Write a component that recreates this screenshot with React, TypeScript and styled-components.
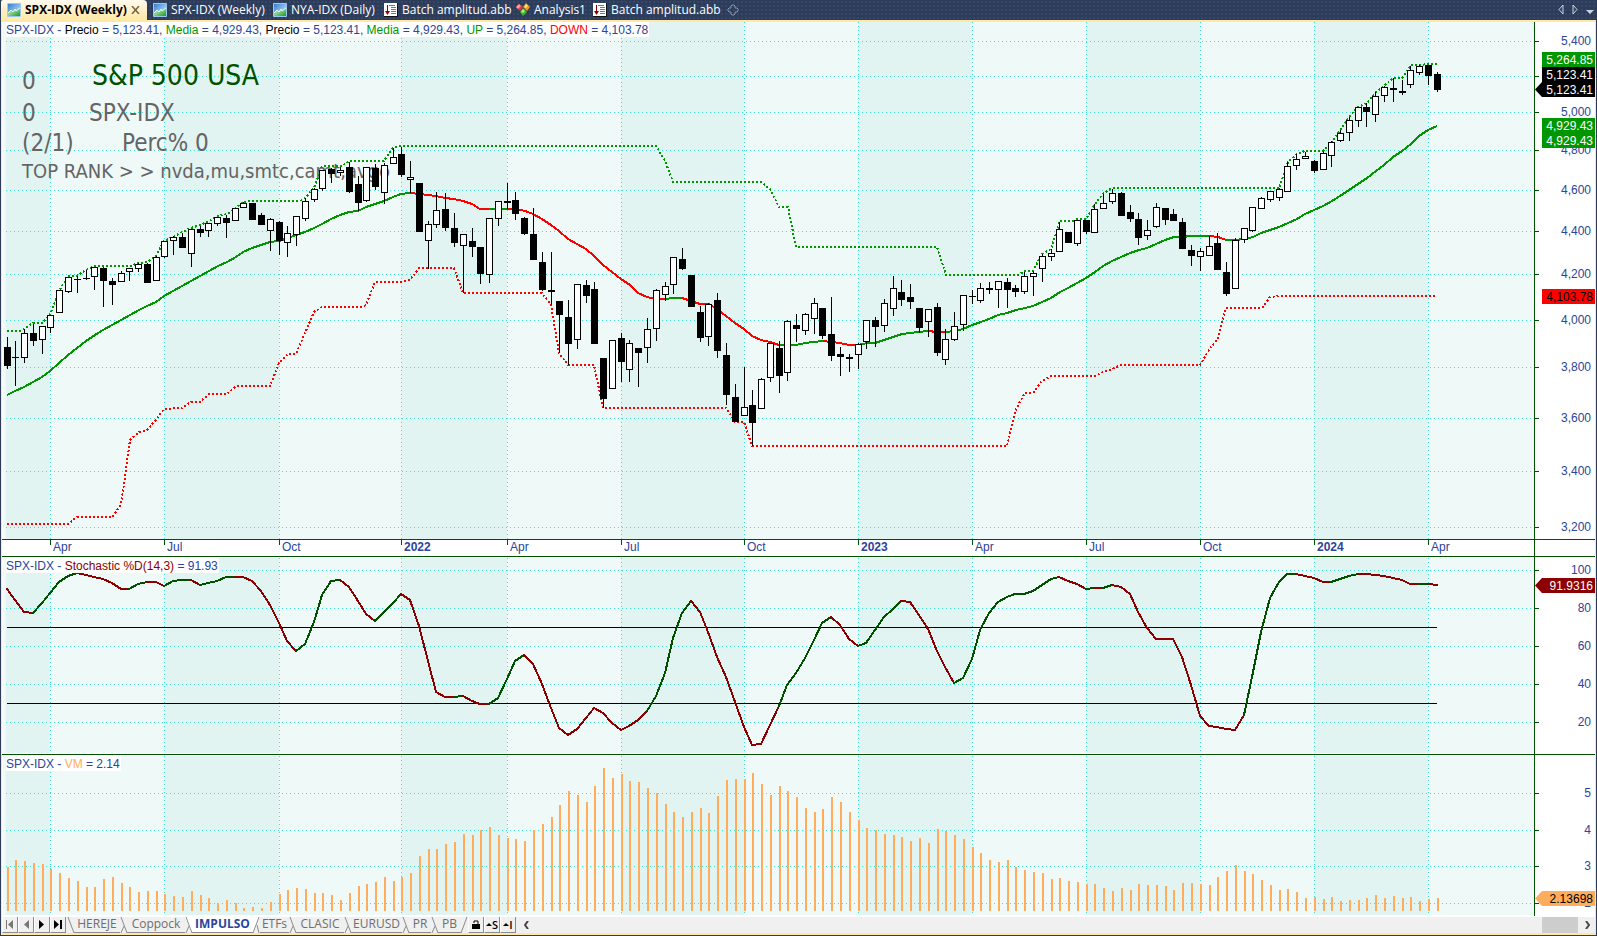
import React from "react";
import styled, { createGlobalStyle } from "styled-components";

/* ---------- palette ---------- */

const navy = "#2d3c5b";
const cream = "#ffe8a6";
const axisGreen = "#005000";
const labelBlue = "#2a459a";
const bandDark = "#e1f4f2";
const bandLight = "#eff9f8";
const gridTeal = "#40e0d0";
const up = "#009600";
const down = "#ff0000";
const stochUp = "#005000";
const stochDown = "#8b0000";
const vmOrange = "#ffad5c";

/* ---------- data ---------- */

type Candle = [high: number, top: number, bottom: number, low: number, filled: 0 | 1];

const candles: Candle[] = [
  [337, 347, 366, 369, 1], [341, 357, 358, 386, 1], [329, 333, 358, 363, 0], [324, 333, 341, 346, 1],
  [326, 326, 340, 354, 0], [315, 315, 328, 333, 0], [290, 290, 313, 313, 0], [277, 277, 292, 293, 0],
  [276, 279, 280, 293, 1], [270, 278, 279, 280, 1], [267, 267, 277, 290, 0], [267, 268, 281, 307, 1],
  [278, 281, 285, 305, 1], [271, 273, 282, 282, 0], [268, 268, 272, 281, 0], [263, 264, 269, 272, 0],
  [263, 264, 283, 283, 1], [256, 257, 281, 281, 0], [241, 241, 257, 258, 0], [236, 237, 241, 255, 0],
  [233, 237, 248, 248, 1], [229, 229, 254, 267, 0], [226, 229, 233, 237, 1], [223, 223, 231, 237, 0],
  [217, 217, 224, 226, 0], [215, 218, 223, 238, 1], [208, 208, 221, 221, 0], [202, 203, 208, 208, 0],
  [203, 203, 220, 220, 1], [213, 215, 225, 225, 1], [218, 219, 231, 251, 0], [221, 222, 241, 255, 1],
  [226, 233, 243, 257, 0], [216, 216, 235, 246, 0], [198, 201, 219, 221, 0], [188, 189, 200, 202, 0],
  [170, 170, 189, 191, 0], [168, 169, 174, 183, 1], [167, 170, 173, 176, 0], [162, 167, 192, 193, 1],
  [176, 184, 203, 211, 1], [167, 167, 201, 202, 0], [164, 168, 187, 190, 1], [163, 165, 193, 204, 0],
  [148, 157, 164, 164, 0], [147, 154, 175, 177, 1], [161, 177, 180, 193, 0], [183, 183, 232, 232, 1],
  [221, 224, 241, 269, 0], [192, 210, 225, 228, 0], [193, 209, 228, 231, 1], [213, 228, 243, 247, 1],
  [234, 234, 246, 293, 0], [228, 241, 247, 257, 1], [247, 247, 274, 284, 1], [218, 218, 275, 283, 0],
  [201, 201, 219, 226, 0], [183, 201, 203, 209, 1], [192, 200, 214, 220, 1], [217, 218, 234, 235, 1],
  [208, 234, 260, 260, 1], [252, 262, 290, 291, 1], [252, 290, 292, 305, 1], [301, 301, 315, 353, 1],
  [300, 317, 344, 365, 1], [284, 284, 340, 349, 0], [280, 285, 296, 303, 1], [282, 289, 344, 344, 1],
  [358, 358, 399, 408, 1], [340, 340, 389, 389, 0], [333, 338, 362, 382, 1], [340, 343, 370, 382, 0],
  [348, 348, 353, 387, 1], [318, 329, 348, 363, 0], [289, 290, 329, 341, 0], [282, 286, 295, 301, 0],
  [257, 257, 285, 294, 0], [248, 259, 269, 270, 1], [275, 275, 307, 307, 1], [306, 312, 338, 342, 1],
  [303, 304, 337, 346, 0], [293, 300, 351, 358, 1], [343, 355, 395, 405, 1], [384, 397, 422, 422, 1],
  [367, 407, 416, 416, 0], [390, 405, 423, 446, 1], [378, 379, 409, 409, 0], [343, 343, 378, 382, 0],
  [341, 348, 376, 393, 1], [320, 321, 373, 381, 0], [314, 325, 329, 342, 1], [313, 314, 331, 335, 0],
  [298, 303, 319, 334, 0], [308, 308, 336, 339, 1], [297, 334, 356, 361, 1], [347, 354, 357, 376, 1],
  [354, 357, 359, 372, 1], [343, 344, 355, 369, 0], [320, 320, 342, 349, 0], [317, 320, 327, 347, 1],
  [299, 303, 326, 332, 0], [276, 288, 309, 316, 0], [280, 292, 300, 306, 1], [284, 297, 302, 309, 1],
  [308, 308, 328, 333, 1], [309, 309, 322, 337, 0], [303, 307, 353, 356, 1], [329, 339, 360, 365, 0],
  [312, 326, 340, 341, 0], [295, 295, 325, 331, 0], [290, 296, 297, 304, 1], [283, 288, 301, 303, 0],
  [282, 288, 290, 294, 1], [281, 281, 290, 308, 0], [278, 282, 290, 308, 1], [285, 288, 292, 297, 1],
  [272, 276, 292, 294, 0], [271, 273, 277, 296, 0], [254, 256, 269, 282, 0], [249, 253, 257, 261, 0],
  [222, 229, 252, 252, 0], [232, 232, 243, 243, 1], [220, 220, 244, 246, 0], [220, 220, 232, 234, 1],
  [204, 209, 233, 233, 0], [194, 203, 209, 209, 0], [189, 193, 202, 204, 0], [192, 193, 216, 216, 1],
  [205, 212, 219, 222, 1], [213, 219, 238, 245, 1], [220, 230, 236, 240, 0], [203, 207, 227, 228, 0],
  [208, 208, 220, 225, 1], [209, 214, 221, 221, 1], [218, 222, 249, 249, 1], [245, 250, 256, 266, 1],
  [248, 251, 257, 271, 0], [236, 246, 256, 256, 0], [233, 243, 270, 270, 1], [262, 272, 294, 296, 1],
  [238, 240, 289, 289, 0], [228, 228, 240, 243, 0], [207, 207, 231, 232, 0], [197, 198, 209, 209, 0],
  [191, 191, 200, 202, 0], [188, 189, 198, 201, 0], [162, 166, 192, 192, 0], [154, 159, 166, 170, 0],
  [152, 156, 159, 159, 0], [160, 161, 171, 173, 1], [151, 153, 170, 170, 0], [141, 142, 156, 167, 0],
  [130, 133, 141, 142, 0], [117, 120, 133, 141, 0], [107, 107, 121, 127, 0], [103, 107, 112, 127, 1],
  [92, 96, 115, 122, 0], [86, 87, 96, 102, 0], [78, 88, 90, 102, 1], [80, 91, 93, 95, 1],
  [66, 70, 85, 88, 0], [65, 66, 73, 75, 0], [65, 65, 76, 85, 1], [72, 74, 90, 92, 1],
];

const average: { color: string; points: string }[] = [
  { color: up, points: "7,395 15,391 24,387 33,382 42,377 50,371 59,363 68,355 77,348 86,341 95,335 103,330 112,325 121,320 130,315 139,310 147,306 156,302 164,296 173,291 182,286 191,281 200,276 209,271 218,266 227,262 236,257 243,252 252,248 261,245 270,242 279,241 288,238 296,235 305,232 314,228 322,224 331,219 340,215 349,212 358,211 366,207 375,204 384,201 393,197 401,194 410,193" },
  { color: down, points: "410,193 419,194 428,195 436,196 445,198 454,199 463,201 472,204 480,209 489,209" },
  { color: up, points: "489,209 507,209" },
  { color: down, points: "507,209 516,209 525,211 533,214 542,219 551,225 559,231 568,239 577,244 586,249 594,256 603,265 612,272 621,279 630,285 638,293 647,297 656,299 665,299" },
  { color: up, points: "665,299 673,298 682,298" },
  { color: down, points: "682,298 691,301 700,304 709,304 717,309 726,316 735,323 744,329 752,336 761,340 770,342 779,345" },
  { color: up, points: "779,345 796,345 805,343 814,342 823,341" },
  { color: down, points: "823,341 831,342 840,343 849,345 858,345" },
  { color: up, points: "858,345 867,343 875,343 884,340 893,337 902,334 910,333 919,332 928,331" },
  { color: down, points: "928,331 937,332 946,332" },
  { color: up, points: "946,332 954,331 963,329 972,325 981,322 989,319 998,315 1007,313 1016,310 1025,308 1033,306 1042,302 1051,298 1060,292 1068,288 1077,283 1086,278 1095,272 1103,266 1112,261 1121,257 1130,253 1139,250 1147,248 1156,244 1165,240 1174,237 1182,237 1191,236 1209,236" },
  { color: down, points: "1209,236 1218,237 1226,240" },
  { color: up, points: "1226,240 1235,240 1244,239 1253,237 1261,233 1270,230 1279,227 1288,223 1297,219 1305,214 1314,210 1323,206 1332,201 1340,196 1349,190 1358,184 1367,178 1376,171 1384,165 1393,157 1402,151 1411,144 1419,136 1428,130 1437,126" },
];

const upperBand =
  "7,331 20,331 24,329 33,323 42,323 50,315 59,291 68,276 77,276 86,270 95,266 130,266 139,263 147,262 156,256 164,241 173,237 182,232 191,228 200,225 209,221 218,216 227,214 236,208 243,202 252,201 300,201 305,198 314,188 322,166 342,166 349,161 384,161 393,148 401,146 656,146 665,161 673,182 761,182 770,189 779,207 788,207 796,247 937,247 946,275 1018,275 1025,271 1033,271 1042,254 1051,249 1060,221 1074,221 1077,219 1086,219 1095,204 1103,194 1112,188 1279,188 1288,162 1297,154 1305,151 1323,151 1332,142 1340,130 1349,117 1358,107 1367,103 1376,92 1384,86 1393,78 1402,78 1411,65 1437,64";

const lowerBand =
  "7,524 68,524 77,517 112,517 121,505 130,440 139,432 147,430 156,420 164,409 182,408 191,402 200,402 209,394 227,394 236,386 270,386 279,363 288,354 296,354 305,333 314,312 322,307 361,307 366,305 375,282 402,282 410,280 419,268 454,268 463,293 542,293 551,305 559,353 568,365 594,365 603,408 726,408 735,422 744,422 752,446 1007,446 1016,409 1025,393 1033,393 1042,381 1051,376 1095,376 1103,372 1112,369 1121,365 1200,365 1209,350 1218,338 1226,308 1262,308 1270,297 1279,296 1437,296";

/* Depth below the top of the oscillator panel, three units to a pixel. */
const stochastic = [
  146, 180, 215, 219, 190, 160, 126, 107, 99, 104, 110, 118, 130, 147, 147, 132, 127, 127, 138, 123, 121,
  120, 135, 129, 124, 111, 110, 111, 123, 153, 195, 250, 302, 333, 312, 247, 165, 123, 120, 140, 182, 223,
  244, 216, 189, 163, 181, 258, 362, 455, 471, 471, 467, 482, 492, 492, 473, 418, 364, 345, 371, 433, 505,
  564, 585, 566, 533, 503, 518, 548, 571, 557, 540, 512, 468, 398, 295, 220, 183, 216, 277, 352, 410, 487,
  562, 614, 611, 556, 497, 436, 400, 355, 300, 248, 231, 255, 296, 318, 308, 270, 232, 206, 183, 186, 225,
  268, 333, 380, 430, 413, 357, 270, 220, 187, 172, 163, 162, 154, 136, 118, 110, 124, 133, 147, 143, 143,
  134, 142, 161, 215, 264, 297, 297, 297, 350, 435, 528, 557, 562, 566, 570, 525, 410, 275, 173, 125, 102,
  101, 107, 115, 126, 126, 116, 109, 101, 103, 106, 109, 115, 121, 132, 132, 131, 135,
];
const OVERSOLD = 490;

const vm = [
  44, 51, 50, 48, 47, 42, 38, 33, 30, 24, 24, 32, 34, 28, 24, 19, 20, 20, 17, 15, 14, 20, 16, 13, 8, 11, 8,
  3, 4, 3, 9, 17, 21, 23, 22, 18, 18, 16, 11, 18, 25, 27, 29, 34, 30, 34, 38, 55, 62, 62, 67, 69, 77, 76,
  81, 84, 76, 73, 72, 70, 81, 87, 94, 106, 120, 116, 109, 125, 143, 133, 137, 130, 129, 123, 118, 107, 99,
  94, 99, 103, 98, 115, 131, 132, 132, 138, 127, 116, 125, 120, 114, 103, 99, 102, 114, 109, 99, 91, 83,
  81, 77, 76, 74, 70, 73, 68, 82, 80, 76, 72, 64, 58, 51, 49, 51, 44, 41, 39, 38, 32, 33, 30, 29, 27, 27,
  23, 20, 23, 21, 27, 26, 26, 25, 21, 28, 28, 27, 26, 34, 40, 46, 40, 37, 31, 26, 21, 22, 19, 13, 14, 12,
  14, 10, 11, 11, 13, 16, 13, 15, 13, 14, 10, 12, 13,
];

const months = [
  { x: 50, text: "Apr" }, { x: 164, text: "Jul" }, { x: 279, text: "Oct" }, { x: 401, text: "2022", year: true },
  { x: 507, text: "Apr" }, { x: 621, text: "Jul" }, { x: 744, text: "Oct" }, { x: 858, text: "2023", year: true },
  { x: 972, text: "Apr" }, { x: 1086, text: "Jul" }, { x: 1200, text: "Oct" }, { x: 1314, text: "2024", year: true },
  { x: 1428, text: "Apr" },
];

const bands = [[6, 50], [164, 279], [401, 507], [621, 744], [858, 972], [1086, 1200], [1314, 1428]];

const PLOT_LEFT = 2;
const PLOT_WIDTH = 1532;
const barX = (i: number) => Math.floor(50.94 + 8.7732 * (i - 5));

interface PanelShape { top: number; height: number; ticks: { y: number; text: string }[] }

const pricePanel: PanelShape = {
  top: 22, height: 517,
  ticks: [
    { y: 41, text: "5,400" }, { y: 76, text: "" }, { y: 112, text: "5,000" }, { y: 150, text: "4,800" },
    { y: 190, text: "4,600" }, { y: 231, text: "4,400" }, { y: 274, text: "4,200" }, { y: 320, text: "4,000" },
    { y: 367, text: "3,800" }, { y: 418, text: "3,600" }, { y: 471, text: "3,400" }, { y: 527, text: "3,200" },
  ],
};
const stochPanel: PanelShape = {
  top: 557, height: 197,
  ticks: [{ y: 570, text: "100" }, { y: 608, text: "80" }, { y: 646, text: "60" }, { y: 684, text: "40" }, { y: 722, text: "20" }],
};
const vmPanel: PanelShape = {
  top: 755, height: 161,
  ticks: [{ y: 793, text: "5" }, { y: 830, text: "4" }, { y: 866, text: "3" }, { y: 903, text: "2" }],
};

/* ---------- styles ---------- */

const GlobalStyle = createGlobalStyle`
  *, *::before, *::after { box-sizing: border-box; }
  body { margin: 0; background: ${navy}; }
  button { border: 0; padding: 0; margin: 0; background: none; font: inherit; color: inherit; }
`;

const Window = styled.main`
  display: flex;
  flex-direction: column;
  height: 100vh;
  min-height: 480px;
  overflow: hidden;
  font-family: "Liberation Sans", Arial, sans-serif;
  font-size: 12px;
  line-height: 15px;
  color: ${labelBlue};
`;

const TabBar = styled.nav`
  display: flex;
  align-items: stretch;
  flex: none;
  height: 20px;
  padding-left: 1px;
  background-color: ${navy};
  background-image: radial-gradient(#354868 1px, transparent 1px);
  background-size: 4px 4px;
  font-family: "Open Sans", "Noto Sans", sans-serif;
  font-size: 12px;
  line-height: 18px;
`;

const DocTab = styled.button<{ $active?: boolean; $width: number }>`
  display: flex;
  align-items: center;
  gap: 4px;
  flex: none;
  width: ${(p) => p.$width}px;
  padding-left: 6px;
  color: ${(p) => (p.$active ? "#000" : "#fff")};
  font-weight: ${(p) => (p.$active ? 700 : 400)};
  background: ${(p) => (p.$active ? `linear-gradient(#fffaf0, #fff0c8 50%, ${cream})` : "none")};
  border-radius: 2px 4px 0 0;
  white-space: nowrap;
  svg { flex: none; }
`;

const TabTools = styled.div`
  display: flex;
  align-items: center;
  gap: 8px;
  margin-left: auto;
  padding: 0 3px 2px 0;
  button { display: flex; }
`;

const Frame = styled.div`
  display: flex;
  flex-direction: column;
  flex: 1;
  min-height: 0;
  margin: 0 1px 1px;
  border: solid ${cream};
  border-width: 2px 1px;
  background: #fff;
`;

const Panel = styled.section<{ $grow: number }>`
  display: grid;
  grid-template-columns: minmax(0, 1fr) 61px;
  flex: ${(p) => p.$grow} 1 0;
  min-height: 0;
`;

const Plot = styled.div`
  position: relative;
  overflow: hidden;
`;

const Layer = styled.svg`
  position: absolute;
  inset: 0;
  width: 100%;
  height: 100%;
  shape-rendering: crispEdges;
`;

const Legend = styled.p<{ $inset?: boolean }>`
  position: absolute;
  top: ${(p) => (p.$inset ? 1 : 0)}px;
  left: 4px;
  margin: 0;
  padding: 1px 1px 0 0;
  line-height: 14px;
  background: #fff;
  white-space: nowrap;
`;

const Ink = styled.span<{ $color: string }>`
  color: ${(p) => p.$color};
`;

const Notes = styled.div`
  position: absolute;
  top: 43px;
  left: 20px;
  font-family: "DejaVu Sans Condensed", "Noto Sans", sans-serif;
  color: #646464;
  white-space: nowrap;
`;

const NoteRow = styled.div<{ $tight?: boolean; $small?: boolean }>`
  display: flex;
  align-items: center;
  height: ${(p) => (p.$tight ? 28 : 32)}px;
  font-size: ${(p) => (p.$small ? 20 : 24)}px;
`;

const NoteCell = styled.span<{ $width: number }>`
  width: ${(p) => p.$width}px;
`;

const Title = styled.h1`
  margin: 0;
  padding-bottom: 10px;
  font-size: 28px;
  font-weight: 400;
  line-height: 32px;
  color: #005000;
`;

const Axis = styled.div`
  position: relative;
  overflow: hidden;
  border-left: 1px solid ${axisGreen};
  background: #fff;
`;

const AxisLabel = styled.span`
  position: absolute;
  left: 0;
  right: 0;
  height: 15px;
  margin-top: -7px;
  padding-right: 4px;
  text-align: right;

  &::before {
    content: "";
    position: absolute;
    left: 0;
    top: 7px;
    width: 4px;
    height: 1px;
    background: ${axisGreen};
  }
`;

const Tag = styled.output<{ $bg: string; $ink: string; $arrow?: boolean }>`
  position: absolute;
  right: 0;
  width: ${(p) => (p.$arrow ? 60 : 53)}px;
  height: 15px;
  padding: 1px 2px 0 0;
  line-height: 14px;
  text-align: right;
  background: ${(p) => p.$bg};
  color: ${(p) => p.$ink};
  clip-path: ${(p) => (p.$arrow ? "polygon(0 50%, 7px 0, 100% 0, 100% 100%, 7px 100%)" : "none")};
`;

const Divider = styled.div<{ $color: string }>`
  flex: none;
  height: 1px;
  background: ${(p) => p.$color};
`;

const DateAxis = styled.div`
  display: grid;
  grid-template-columns: minmax(0, 1fr) 61px;
  flex: none;
  height: 16px;
`;

const DateTrack = styled.div`
  position: relative;
`;

const DateLabel = styled.span<{ $year?: boolean }>`
  position: absolute;
  top: 0;
  padding-left: 3px;
  font-weight: ${(p) => (p.$year ? 700 : 400)};

  &::before {
    content: "";
    position: absolute;
    left: 0;
    top: 0;
    width: 1px;
    height: 5px;
    background: ${axisGreen};
  }
`;

const SheetBar = styled.footer`
  display: flex;
  align-items: stretch;
  flex: none;
  height: 16px;
  background: #f0f0f0;
  font-family: "Open Sans", "Noto Sans", sans-serif;
  font-size: 12px;
  line-height: 13px;
  color: #6e6e6e;
  svg { display: block; flex: none; }
`;

const ToolButton = styled.button`
  display: flex;
  align-items: center;
  justify-content: center;
  width: 16px;
  border-right: 1px solid #8c8c8c;
  border-bottom: 1px solid #8c8c8c;
  border-left: 1px solid #fff;
`;

const SyncButton = styled(ToolButton)`
  font-size: 11px;
  font-weight: 600;
  color: #000;
`;

const Sheets = styled.div`
  display: flex;
  margin-left: 1px;
`;

const SheetTab = styled.button<{ $active?: boolean; $width: number }>`
  width: ${(p) => p.$width}px;
  padding-bottom: 2px;
  text-align: center;
  white-space: nowrap;
  color: ${(p) => (p.$active ? labelBlue : "#6e6e6e")};
  font-weight: ${(p) => (p.$active ? 700 : 400)};
  background: ${(p) => (p.$active ? "#fff" : "none")};
  border-bottom: 1px solid #8c8c8c;
`;

const ScrollTrack = styled.div`
  display: flex;
  flex: 1;
  align-items: center;
  justify-content: space-between;
  padding: 0 5px 0 8px;
  button { display: flex; }
`;

const ScrollEnd = styled.div`
  display: flex;
  align-items: center;
  align-self: stretch;
  gap: 7px;
`;

const Thumb = styled.div`
  align-self: stretch;
  width: 36px;
  background: #cdcdcd;
`;

/* ---------- icons ---------- */

const ChartIcon = () => (
  <svg width="14" height="14" viewBox="0 0 14 14" aria-hidden="true">
    <defs>
      <linearGradient id="sky" x1="0" y1="0" x2="1" y2="1">
        <stop offset="0" stopColor="#2f7fd0" />
        <stop offset="1" stopColor="#d8efff" />
      </linearGradient>
      <linearGradient id="hill" x1="0" y1="0" x2="1" y2="1">
        <stop offset="0" stopColor="#e6fbe0" />
        <stop offset="1" stopColor="#169a1e" />
      </linearGradient>
    </defs>
    <rect x="0" y="0" width="14" height="14" rx="1" fill="#9cc8ee" />
    <rect x="1" y="1" width="12" height="12" fill="url(#sky)" />
    <path d="M1 10 L4 7 L6 9 L8 6 L9 8 L13 5 V13 H1Z" fill="url(#hill)" />
    <path d="M1 10 L4 7 L6 9 L8 6 L9 8 L13 5" fill="none" stroke="#e8f8f4" />
  </svg>
);

const BatchIcon = () => (
  <svg width="14" height="14" viewBox="0 0 14 14" aria-hidden="true">
    <rect x="0" y="0" width="14" height="14" fill="#111" />
    <rect x="0" y="0" width="13" height="13" fill="#fff" />
    <path d="M3.500 2V10" stroke="#8b0000" />
    <path d="M1 8H6L3.500 12Z" fill="#8b0000" />
    <path d="M5 2.500H11M7 4.500H12M7 6.500H12M7 8.500H12M7 10.500H12" stroke="#777" />
  </svg>
);

const AnalysisIcon = () => (
  <svg width="14" height="14" viewBox="0 0 14 14" aria-hidden="true">
    <path d="M0 4L3 1L7 4L4 8Z" fill="#e8353a" />
    <path d="M0 4L3 1L5 3L2 6Z" fill="#ff9a94" />
    <path d="M7 4L10 0L14 4L11 8Z" fill="#f09a1c" />
    <path d="M8 4L10 1L12 3L10 5Z" fill="#ffe06a" />
    <path d="M4 9L7 5L11 9L7 13Z" fill="#3cb829" />
    <path d="M5 9L7 6L9 8L7 10Z" fill="#a8f08a" />
  </svg>
);

const PlusIcon = () => (
  <svg width="12" height="12" viewBox="0 0 12 12" aria-hidden="true">
    <path d="M4 4V2L5 1H7L8 2V4H10L11 5V7L10 8H8V10L7 11H5L4 10V8H2L1 7V5L2 4Z" fill="none" stroke="#8b93a5" />
  </svg>
);

const Edge = ({ kind }: { kind: "left" | "mid" | "toActive" | "fromActive" | "right" }) => (
  <svg width="7" height="16" viewBox="0 0 7 16" aria-hidden="true">
    {kind === "toActive" && <path d="M0 0H7V16H6Z" fill="#fff" />}
    {kind === "fromActive" && <path d="M0 0H7L1 16H0Z" fill="#fff" />}
    {(kind === "left" || kind === "mid" || kind === "toActive") && (
      <path d="M1 0L7 16" stroke="#8c8c8c" fill="none" />
    )}
    {(kind === "mid" || kind === "toActive") && <path d="M4 9L1 16" stroke="#8c8c8c" fill="none" />}
    {(kind === "right" || kind === "fromActive") && <path d="M6 0L0 16" stroke="#8c8c8c" fill="none" />}
    {kind === "fromActive" && <path d="M4 8L6 16" stroke="#8c8c8c" fill="none" />}
  </svg>
);

/* ---------- chart parts ---------- */

const pct = (value: number, total: number) => `${(value / total) * 100}%`;

function Backdrop({ shape, inset = 0 }: { shape: PanelShape; inset?: number }) {
  const top = shape.top + inset;
  const height = shape.height - inset * 2;
  return (
    <Layer viewBox={`${PLOT_LEFT} ${shape.top} ${PLOT_WIDTH} ${shape.height}`} preserveAspectRatio="none" aria-hidden="true">
      <rect x={3} y={top} width={1531} height={height} fill={bandLight} />
      {bands.map(([from, to]) => (
        <rect key={from} x={from} y={top} width={to - from} height={height} fill={bandDark} />
      ))}
      <g stroke={gridTeal} strokeDasharray="1 3">
        {shape.ticks.map(({ y }) => (
          <line key={y} x1={6} x2={1533} y1={y + 0.5} y2={y + 0.5} />
        ))}
        {months.map(({ x }) => (
          <line key={x} x1={x + 0.5} x2={x + 0.5} y1={top} y2={top + height} />
        ))}
      </g>
    </Layer>
  );
}

function Foreground({ shape, label, children }: { shape: PanelShape; label: string; children: React.ReactNode }) {
  return (
    <Layer viewBox={`${PLOT_LEFT} ${shape.top} ${PLOT_WIDTH} ${shape.height}`} preserveAspectRatio="none" role="img" aria-label={label}>
      {children}
    </Layer>
  );
}

interface TagSpec { y: number; text: string; bg: string; ink: string; arrow?: boolean }

function ValueAxis({ shape, tags }: { shape: PanelShape; tags: TagSpec[] }) {
  return (
    <Axis>
      {shape.ticks.map(({ y, text }) => (
        <AxisLabel key={y} style={{ top: pct(y - shape.top, shape.height) }}>{text}</AxisLabel>
      ))}
      {tags.map((t) => (
        <Tag key={t.y} $bg={t.bg} $ink={t.ink} $arrow={t.arrow} style={{ top: pct(t.y - shape.top, shape.height) }}>
          {t.text}
        </Tag>
      ))}
    </Axis>
  );
}

function Candles() {
  return (
    <>
      {candles.map(([high, top, bottom, low, filled], i) => {
        const x = barX(i);
        return (
          <g key={i}>
            <rect x={x} y={high} width={1} height={low - high} fill="#000" />
            <rect x={x - 3} y={top} width={7} height={bottom - top} fill="#000" />
            {!filled && <rect x={x - 2} y={top + 1} width={5} height={bottom - top - 2} fill="#fff" />}
          </g>
        );
      })}
    </>
  );
}

function Oscillator() {
  const y = (depth: number) => 540 + Math.round(depth / 3);
  return (
    <g strokeWidth={2} strokeLinecap="square">
      {stochastic.slice(1).map((value, i) => {
        const rising = value < stochastic[i] && value < OVERSOLD;
        return (
          <line key={i} x1={barX(i)} y1={y(stochastic[i])} x2={barX(i + 1)} y2={y(value)} stroke={rising ? stochUp : stochDown} />
        );
      })}
    </g>
  );
}

const docTabs = [
  { text: "SPX-IDX (Weekly)", icon: <ChartIcon />, width: 146, active: true },
  { text: "SPX-IDX (Weekly)", icon: <ChartIcon />, width: 120 },
  { text: "NYA-IDX (Daily)", icon: <ChartIcon />, width: 111 },
  { text: "Batch amplitud.abb", icon: <BatchIcon />, width: 132 },
  { text: "Analysis1", icon: <AnalysisIcon />, width: 77 },
  { text: "Batch amplitud.abb", icon: <BatchIcon />, width: 134 },
];

export default function App() {
  return (
    <Window>
      <GlobalStyle />
      <TabBar>
        {docTabs.map((t, i) => (
          <DocTab key={i} $active={t.active} $width={t.width}>
            {t.icon}
            {t.text}
            {t.active && (
              <svg width="9" height="8" viewBox="0 0 9 8" aria-hidden="true">
                <path d="M1 0L8 8M8 0L1 8" stroke="#75633d" strokeWidth="1.5" />
              </svg>
            )}
          </DocTab>
        ))}
        <DocTab $width={24} aria-label="New tab"><PlusIcon /></DocTab>
        <TabTools>
          <button aria-label="Previous tab">
            <svg width="6" height="9" viewBox="0 0 6 9"><path d="M5 0V9L1 4.500Z" fill="none" stroke="#ced4df" /></svg>
          </button>
          <button aria-label="Next tab">
            <svg width="6" height="9" viewBox="0 0 6 9"><path d="M1 0V9L5 4.500Z" fill="none" stroke="#ced4df" /></svg>
          </button>
          <button aria-label="All tabs">
            <svg width="8" height="9" viewBox="0 0 8 9"><path d="M0 5H8L4 9Z" fill="#ced4df" /></svg>
          </button>
        </TabTools>
      </TabBar>

      <Frame>
        <Panel $grow={517}>
          <Plot>
            <Backdrop shape={pricePanel} />
            <Notes>
              <NoteRow>
                <NoteCell $width={70}>0</NoteCell>
                <Title>S&amp;P 500 USA</Title>
              </NoteRow>
              <NoteRow><NoteCell $width={67}>0</NoteCell>SPX-IDX</NoteRow>
              <NoteRow $tight><NoteCell $width={100}>(2/1)</NoteCell>Perc% 0</NoteRow>
              <NoteRow $tight $small>TOP RANK &gt; &gt; nvda,mu,smtc,camt,avgo</NoteRow>
            </Notes>
            <Foreground shape={pricePanel} label="SPX-IDX weekly price">
              <g fill="none" strokeWidth={2}>
                <polyline points={upperBand} stroke={up} strokeDasharray="2 2" />
                <polyline points={lowerBand} stroke={down} strokeDasharray="2 2" />
                {average.map((segment) => (
                  <polyline key={segment.points} points={segment.points} stroke={segment.color} />
                ))}
              </g>
              <Candles />
            </Foreground>
            <Legend>
              SPX-IDX - <Ink $color="#000">Precio</Ink> = 5,123.41, <Ink $color={up}>Media</Ink> = 4,929.43,{" "}
              <Ink $color="#000">Precio</Ink> = 5,123.41, <Ink $color={up}>Media</Ink> = 4,929.43,{" "}
              <Ink $color={up}>UP</Ink> = 5,264.85, <Ink $color={down}>DOWN</Ink> = 4,103.78
            </Legend>
          </Plot>
          <ValueAxis
            shape={pricePanel}
            tags={[
              { y: 52, text: "5,264.85", bg: up, ink: "#fff" },
              { y: 67, text: "5,123.41", bg: "#000", ink: "#fff" },
              { y: 82, text: "5,123.41", bg: "#000", ink: "#fff", arrow: true },
              { y: 118, text: "4,929.43", bg: up, ink: "#fff" },
              { y: 133, text: "4,929.43", bg: up, ink: "#fff" },
              { y: 289, text: "4,103.78", bg: down, ink: "#000" },
            ]}
          />
        </Panel>
        <Divider $color={axisGreen} />
        <DateAxis>
          <DateTrack>
            {months.map(({ x, text, year }) => (
              <DateLabel key={x} $year={year} style={{ left: pct(x - PLOT_LEFT, PLOT_WIDTH) }}>{text}</DateLabel>
            ))}
          </DateTrack>
          <Axis />
        </DateAxis>
        <Divider $color={axisGreen} />

        <Panel $grow={197}>
          <Plot>
            <Backdrop shape={stochPanel} inset={1} />
            <Foreground shape={stochPanel} label="Stochastic %D">
              <rect x={7} y={627} width={1430} height={1} fill="#000" />
              <rect x={7} y={703} width={1430} height={1} fill="#000" />
              <Oscillator />
            </Foreground>
            <Legend $inset>
              SPX-IDX - <Ink $color={stochDown}>Stochastic %D(14,3)</Ink> = 91.93
            </Legend>
          </Plot>
          <ValueAxis shape={stochPanel} tags={[{ y: 578, text: "91.9316", bg: stochDown, ink: "#fff", arrow: true }]} />
        </Panel>
        <Divider $color={axisGreen} />

        <Panel $grow={161}>
          <Plot>
            <Backdrop shape={vmPanel} inset={1} />
            <Foreground shape={vmPanel} label="VM">
              {vm.map((height, i) => (
                <rect key={i} x={barX(i)} y={911 - height} width={2} height={height} fill={vmOrange} />
              ))}
            </Foreground>
            <Legend $inset>
              SPX-IDX - <Ink $color={vmOrange}>VM</Ink> = 2.14
            </Legend>
          </Plot>
          <ValueAxis shape={vmPanel} tags={[{ y: 891, text: "2.13698", bg: vmOrange, ink: "#000", arrow: true }]} />
        </Panel>
        <Divider $color="#fff" />

        <SheetBar>
          <ToolButton aria-label="First sheet">
            <svg width="8" height="9" viewBox="0 0 8 9"><path d="M0 0H1V9H0ZM7 0V9L2 4.500Z" fill="#777" /></svg>
          </ToolButton>
          <ToolButton aria-label="Previous sheet">
            <svg width="8" height="9" viewBox="0 0 8 9"><path d="M7 0V9L2 4.500Z" fill="#777" /></svg>
          </ToolButton>
          <ToolButton aria-label="Next sheet">
            <svg width="8" height="9" viewBox="0 0 8 9"><path d="M1 0V9L6 4.500Z" fill="#000" /></svg>
          </ToolButton>
          <ToolButton aria-label="Last sheet">
            <svg width="8" height="9" viewBox="0 0 8 9"><path d="M0 0V9L5 4.500ZM6 0H8V9H6Z" fill="#000" /></svg>
          </ToolButton>
          <Sheets>
            <Edge kind="left" />
            <SheetTab $width={46}>HEREJE</SheetTab>
            <Edge kind="mid" />
            <SheetTab $width={58}>Coppock</SheetTab>
            <Edge kind="toActive" />
            <SheetTab $width={61} $active>IMPULSO</SheetTab>
            <Edge kind="fromActive" />
            <SheetTab $width={29}>ETFs</SheetTab>
            <Edge kind="mid" />
            <SheetTab $width={48}>CLASIC</SheetTab>
            <Edge kind="mid" />
            <SheetTab $width={51}>EURUSD</SheetTab>
            <Edge kind="mid" />
            <SheetTab $width={22}>PR</SheetTab>
            <Edge kind="mid" />
            <SheetTab $width={23}>PB</SheetTab>
            <Edge kind="right" />
          </Sheets>
          <ToolButton aria-label="Lock">
            <svg width="8" height="9" viewBox="0 0 8 9"><path d="M0 4H8V9H0Z" fill="#000" /><path d="M2 3V1H6V4" fill="none" stroke="#000" /></svg>
          </ToolButton>
          <SyncButton aria-label="Symbol sync">
            <svg width="6" height="3" viewBox="0 0 6 3"><path d="M0 3H6L3 0Z" fill="#000" /></svg>
            S
          </SyncButton>
          <SyncButton aria-label="Interval sync">
            <svg width="6" height="3" viewBox="0 0 6 3"><path d="M0 3H6L3 0Z" fill="#000" /></svg>
            I
          </SyncButton>
          <ScrollTrack>
            <button aria-label="Scroll left">
              <svg width="5" height="8" viewBox="0 0 5 8"><path d="M4 0L1 4L4 8" fill="none" stroke="#444" strokeWidth="2" /></svg>
            </button>
            <ScrollEnd>
              <Thumb />
              <button aria-label="Scroll right">
                <svg width="5" height="8" viewBox="0 0 5 8"><path d="M1 0L4 4L1 8" fill="none" stroke="#444" strokeWidth="2" /></svg>
              </button>
            </ScrollEnd>
          </ScrollTrack>
        </SheetBar>
      </Frame>
    </Window>
  );
}
